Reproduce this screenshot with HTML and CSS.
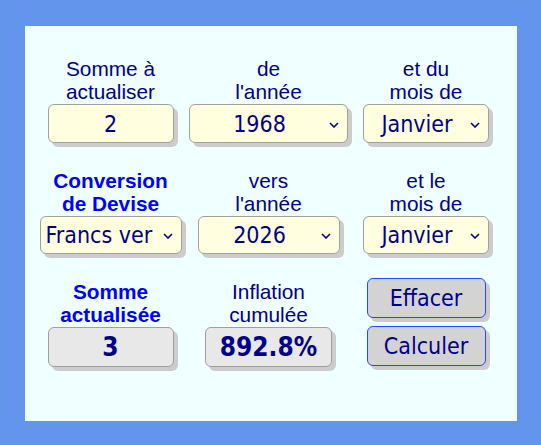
FILE: index.html
```html
<!DOCTYPE html>
<html lang="fr">
<head>
<meta charset="utf-8">
<title>Convertisseur d'inflation</title>
<link rel="stylesheet" href="styles.css">
</head>
<body>
<div class="panel">
  <div class="grid">
    <div class="cell">
      <div class="label">Somme à<br>actualiser</div>
      <div class="field input r1"><span class="txt">2</span></div>
    </div>
    <div class="cell">
      <div class="label">de<br>l'année</div>
      <div class="field select wide r1"><span class="txt">1968</span><svg class="chev" width="10" height="6" viewBox="0 0 10 6"><polyline points="1,1 5,5 9,1"/></svg></div>
    </div>
    <div class="cell">
      <div class="label">et du<br>mois de</div>
      <div class="field select r1"><span class="txt">Janvier</span><svg class="chev" width="10" height="6" viewBox="0 0 10 6"><polyline points="1,1 5,5 9,1"/></svg></div>
    </div>

    <div class="cell">
      <div class="label strong">Conversion<br>de Devise</div>
      <div class="field select mid r2 start"><span class="txt">Francs ver</span><svg class="chev" width="10" height="6" viewBox="0 0 10 6"><polyline points="1,1 5,5 9,1"/></svg></div>
    </div>
    <div class="cell">
      <div class="label">vers<br>l'année</div>
      <div class="field select mid r2"><span class="txt">2026</span><svg class="chev" width="10" height="6" viewBox="0 0 10 6"><polyline points="1,1 5,5 9,1"/></svg></div>
    </div>
    <div class="cell">
      <div class="label">et le<br>mois de</div>
      <div class="field select r2"><span class="txt">Janvier</span><svg class="chev" width="10" height="6" viewBox="0 0 10 6"><polyline points="1,1 5,5 9,1"/></svg></div>
    </div>

    <div class="cell">
      <div class="label strong">Somme<br>actualisée</div>
      <div class="field result r3"><span class="txt">3</span></div>
    </div>
    <div class="cell">
      <div class="label">Inflation<br>cumulée</div>
      <div class="field result r3"><span class="txt">892.8%</span></div>
    </div>
    <div class="cell buttons">
      <button class="btn">Effacer</button>
      <button class="btn">Calculer</button>
    </div>
  </div>
</div>
</body>
</html>
```

FILE: styles.css
```css
html, body {
  margin: 0;
  padding: 0;
}
body {
  background: #6495ed;
  padding: 26px 24px 24px 25px;
  width: 541px;
  height: 445px;
  box-sizing: border-box;
}
.panel {
  background: #f0ffff;
  width: 492px;
  height: 395px;
  box-sizing: border-box;
  padding: 31px 0 0 6px;
}
.grid {
  display: grid;
  grid-template-columns: 159px 157px 158px;
  row-gap: 26px;
  align-items: start;
}
.cell {
  display: flex;
  flex-direction: column;
  align-items: center;
}
.label {
  font-family: "Liberation Sans", Arial, sans-serif;
  font-size: 20.8px;
  line-height: 23px;
  height: 46px;
  color: #00008b;
  text-align: center;
  margin-bottom: 1px;
  white-space: nowrap;
}
.label.strong {
  font-weight: bold;
  color: #0000ff;
}
.field {
  position: relative;
  box-sizing: border-box;
  width: 126px;
  height: 39px;
  border: 1px solid #a0a0a0;
  border-radius: 6px;
  background: #ffffe0;
  box-shadow: 4px 4px 0 #cccccc;
  font-family: "DejaVu Sans Condensed", "DejaVu Sans", sans-serif;
  font-stretch: condensed;
  font-size: 23px;
  color: #00008b;
  display: flex;
  align-items: center;
  overflow: hidden;
}
.field .txt {
  display: block;
  flex: 1;
  min-width: 0;
  text-align: center;
  white-space: nowrap;
}
.field.r1 { height: 39px; }
.field.r2 { height: 38px; }
.field.r3 { height: 40px; }
.field.wide { width: 159px; }
.field.mid { width: 142px; }
.select {
  padding: 0 22px 0 4px;
}
.select.start {
  padding-left: 5px;
}
.select.start .txt {
  text-align: left;
}
.chev {
  position: absolute;
  right: 8px;
  top: 50%;
  margin-top: -2px;
  fill: none;
  stroke: #00008b;
  stroke-width: 1.6;
}
.result {
  background: #e8e8e8;
  font-weight: bold;
  font-size: 26px;
  width: 127px;
}
.cell:nth-child(7) .result {
  width: 126px;
}
.buttons {
  margin-top: -2px;
  gap: 8px;
}
.btn {
  box-sizing: border-box;
  width: 119px;
  height: 40px;
  background: #d3d3d3;
  border: 1px solid #1a4dff;
  border-radius: 6px;
  box-shadow: 4px 4px 0 #cccccc;
  font-family: "DejaVu Sans Condensed", "DejaVu Sans", sans-serif;
  font-stretch: condensed;
  font-size: 23px;
  color: #00008b;
  padding: 0;
  margin: 0;
}
```
